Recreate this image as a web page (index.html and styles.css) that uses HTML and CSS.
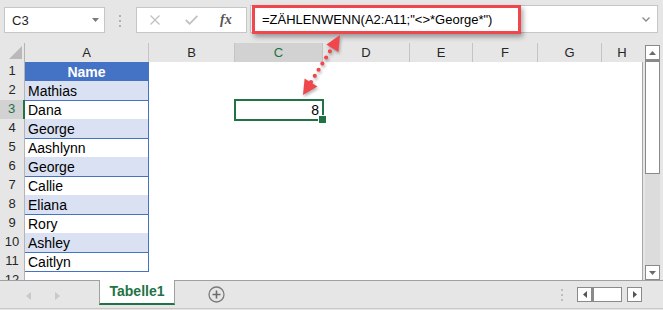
FILE: index.html
```html
<!DOCTYPE html>
<html lang="de">
<head>
    <meta charset="UTF-8">
    <title>Tabelle1 - ZÄHLENWENN</title>
    <link rel="stylesheet" href="styles.css">
</head>
<body>
    <div class="toolbar">
        <div class="namebox">
            <span>C3</span>
            <svg width="7" height="4" viewBox="0 0 7 4"><polygon points="0,0 7,0 3.5,4" fill="#7a7a7a"/></svg>
        </div>
        <div class="grip"><span></span><span></span><span></span></div>
        <div class="fx-box">
            <svg class="ico-x" width="10" height="10" viewBox="0 0 10 10"><path d="M0.5 0.5 L9.5 9.5 M9.5 0.5 L0.5 9.5" stroke="#c2c2c2" stroke-width="1.4" fill="none"/></svg>
            <svg class="ico-ok" width="13" height="10" viewBox="0 0 13 10"><path d="M0.8 5 L4.6 8.8 L12.4 0.8" stroke="#c2c2c2" stroke-width="1.8" fill="none"/></svg>
            <span class="fx">fx</span>
        </div>
        <div class="formula">
            <span>=ZÄHLENWENN(A2:A11;"&lt;&gt;*George*")</span>
            <svg class="chev" width="8" height="5" viewBox="0 0 8 5"><path d="M0.5 0.5 L4 4 L7.5 0.5" stroke="#8a8a8a" stroke-width="1.3" fill="none"/></svg>
            <div class="mark"></div>
        </div>
    </div>

    <div class="sheet">
        <div class="grid">
            <div class="head-row">
                <div class="corner">
                    <svg width="24" height="18" viewBox="0 0 24 18"><polygon points="22,3 22,16 9,16" fill="#b9b9b9"/></svg>
                </div>
                <div class="col">A</div>
                <div class="col">B</div>
                <div class="col sel">C</div>
                <div class="col">D</div>
                <div class="col">E</div>
                <div class="col">F</div>
                <div class="col">G</div>
                <div class="col last">H</div>
            </div>
            <div class="body">
                <div class="row"><div class="rh">1</div><div class="cell head">Name</div></div>
                <div class="row"><div class="rh">2</div><div class="cell band">Mathias</div></div>
                <div class="row">
                    <div class="rh sel">3</div><div class="cell">Dana</div>
                    <div class="active">8</div>
                </div>
                <div class="row"><div class="rh">4</div><div class="cell band">George</div></div>
                <div class="row"><div class="rh">5</div><div class="cell">Aashlynn</div></div>
                <div class="row"><div class="rh">6</div><div class="cell band">George</div></div>
                <div class="row"><div class="rh">7</div><div class="cell">Callie</div></div>
                <div class="row"><div class="rh">8</div><div class="cell band">Eliana</div></div>
                <div class="row"><div class="rh">9</div><div class="cell">Rory</div></div>
                <div class="row"><div class="rh">10</div><div class="cell band">Ashley</div></div>
                <div class="row"><div class="rh">11</div><div class="cell">Caitlyn</div></div>
                <div class="row"><div class="rh">12</div></div>
            </div>
        </div>
        <div class="vscroll">
            <div class="vbtn"><svg width="7" height="4" viewBox="0 0 7 4"><polygon points="0,4 7,4 3.5,0" fill="#6a6a6a"/></svg></div>
            <div class="vthumb"></div>
            <div class="vtrack"></div>
            <div class="vbtn"><svg width="7" height="4" viewBox="0 0 7 4"><polygon points="0,0 7,0 3.5,4" fill="#6a6a6a"/></svg></div>
        </div>
    </div>

    <div class="tabbar">
        <div class="nav">
            <svg width="5" height="8" viewBox="0 0 5 8"><polygon points="5,0 5,8 0,4" fill="#c9c9c9"/></svg>
            <svg width="5" height="8" viewBox="0 0 5 8"><polygon points="0,0 0,8 5,4" fill="#c9c9c9"/></svg>
        </div>
        <div class="tab">Tabelle1</div>
        <svg class="add" width="17" height="17" viewBox="0 0 17 17">
            <circle cx="8.5" cy="8.5" r="7.5" fill="none" stroke="#7b7b7b" stroke-width="1.3"/>
            <path d="M8.5 4.5 V12.5 M4.5 8.5 H12.5" stroke="#6b6b6b" stroke-width="1.6"/>
        </svg>
        <div class="grip small"><span></span><span></span><span></span></div>
        <div class="hscroll">
            <div class="hbtn"><svg width="4" height="7" viewBox="0 0 4 7"><polygon points="4,0 4,7 0,3.5" fill="#555"/></svg></div>
            <div class="hthumb"></div>
            <div class="htrack"></div>
            <div class="hbtn"><svg width="4" height="7" viewBox="0 0 4 7"><polygon points="0,0 0,7 4,3.5" fill="#555"/></svg></div>
        </div>
    </div>

    <!-- callout arrow between formula and result -->
    <svg class="callout" width="663" height="310" viewBox="0 0 663 310">
        <line x1="311" y1="82" x2="332" y2="48" stroke="#f0474c" stroke-width="4.2" stroke-linecap="round" stroke-dasharray="0 7.2"/>
        <polygon points="340,35 338.4,52 326.4,44.6" fill="#f0474c"/>
        <polygon points="303,95 317.4,86.5 304.6,78.5" fill="#f0474c"/>
    </svg>
</body>
</html>
```

FILE: styles.css
```css
* {
    margin: 0;
    padding: 0;
    box-sizing: border-box;
}

body {
    width: 663px;
    height: 310px;
    overflow: hidden;
    position: relative;
    background: #e6e6e6;
    font-family: "Liberation Sans", Arial, sans-serif;
    color: #000;
}

/* formula bar */

.toolbar {
    display: flex;
    align-items: flex-start;
    height: 43px;
}

.namebox {
    margin: 7px 0 0 4px;
    width: 101px;
    height: 26px;
    background: #fff;
    border: 1px solid #c6c6c6;
    display: flex;
    align-items: center;
    justify-content: space-between;
    padding: 0 5px 0 7px;
    font-size: 13px;
    color: #222;
}

.grip {
    display: flex;
    flex-direction: column;
    gap: 3px;
    margin: 15px 0 0 14px;
}

.grip span {
    width: 2px;
    height: 2px;
    background: #b2b2b2;
}

.fx-box {
    margin: 7px 0 0 15px;
    width: 111px;
    height: 26px;
    background: #fff;
    border: 1px solid #c6c6c6;
    display: flex;
    align-items: center;
}

.ico-x {
    margin-left: 13px;
}

.ico-ok {
    margin-left: 25px;
}

.fx {
    margin-left: 22px;
    font-family: "Liberation Serif", serif;
    font-style: italic;
    font-weight: bold;
    font-size: 14px;
    color: #555;
    line-height: 1;
}

.formula {
    position: relative;
    margin: 5px 0 0 3px;
    width: 408px;
    height: 28px;
    background: #fff;
    border: 1px solid #c6c6c6;
    display: flex;
    align-items: center;
    padding: 1px 7px 0 11px;
    font-size: 13px;
}

.chev {
    margin-left: auto;
}

.formula .mark {
    position: absolute;
    left: 1px;
    top: -1px;
    width: 269px;
    height: 29px;
    border: 3px solid #f0474c;
    box-shadow: 2px 3px 5px rgba(0,0,0,0.35);
}

/* grid */

.sheet {
    display: flex;
    height: 237px;
}

.grid {
    width: 643px;
    display: flex;
    flex-direction: column;
}

.head-row,
.row {
    display: grid;
    grid-template-columns: 25px 124px 86px 88px 87px 63px 65px 64px 40px;
    height: 19px;
}

.corner {
    border-bottom: 1px solid #ababab;
    border-right: 1px solid #b4b4b4;
}

.corner svg {
    display: block;
}

.col {
    text-align: center;
    font-size: 13px;
    line-height: 19px;
    color: #262626;
    border-right: 1px solid #c4c4c4;
    border-bottom: 1px solid #ababab;
}

.col.last {
    border-right: none;
}

.col.sel {
    background: #d2d2d2;
    color: #217346;
    border-bottom: 2px solid #217346;
}

.body {
    flex: 1;
    background: #fff;
    border-right: 1px solid #a6a6a6;
    overflow: hidden;
}

.rh {
    background: #e6e6e6;
    text-align: center;
    font-size: 13px;
    line-height: 18px;
    color: #262626;
    border-right: 1px solid #b4b4b4;
    border-bottom: 1px solid #d4d4d4;
}

.rh.sel {
    background: #d2d2d2;
    color: #217346;
    border-right: 2px solid #217346;
}

.cell {
    padding: 1px 0 0 3px;
    font-size: 14px;
    line-height: 18px;
    border-right: 1px solid #4472c4;
    border-bottom: 1px solid #4472c4;
    white-space: nowrap;
}

.cell.band {
    background: #d9e1f2;
}

.cell.head {
    background: #4472c4;
    color: #fff;
    font-weight: bold;
    text-align: center;
    padding-left: 0;
}

.active {
    grid-column: 4;
    position: relative;
    text-align: right;
    padding: 1px 4px 0 0;
    font-size: 14px;
    line-height: 18px;
}

.active::before {
    content: "";
    position: absolute;
    left: -1px;
    top: -1px;
    right: -1px;
    bottom: -1px;
    border: 2px solid #217346;
}

.active::after {
    content: "";
    position: absolute;
    right: -4px;
    bottom: -4px;
    width: 7px;
    height: 7px;
    background: #217346;
    border: 1px solid #fff;
}

/* scroll bars */

.vscroll {
    margin: 2px 0 0 2px;
    width: 15px;
    height: 235px;
    display: flex;
    flex-direction: column;
}

.vbtn,
.hbtn {
    width: 15px;
    height: 15px;
    background: #fff;
    border: 1px solid #8a8a8a;
    display: flex;
    align-items: center;
    justify-content: center;
}

.vthumb {
    height: 114px;
    background: #fff;
    border: 1px solid #8a8a8a;
    border-top-width: 2px;
}

.vtrack {
    flex: 1;
    background: #dcdcdc;
}

/* sheet tabs */

.tabbar {
    display: flex;
    align-items: center;
    height: 29px;
    border-top: 1px solid #a0a0a0;
    border-bottom: 1px solid #c8c8c8;
}

.nav {
    width: 99px;
    display: flex;
    align-items: center;
    gap: 24px;
    padding: 2px 0 0 26px;
}

.tab {
    align-self: flex-start;
    margin-top: -1px;
    width: 76px;
    height: 25px;
    background: #fff;
    border-left: 1px solid #a0a0a0;
    border-right: 1px solid #a0a0a0;
    border-bottom: 2px solid #217346;
    text-align: center;
    font-size: 14px;
    font-weight: bold;
    line-height: 22px;
    color: #217346;
}

.add {
    margin: 0 0 0 33px;
}

.grip.small {
    margin: 0 0 0 336px;
    gap: 3px;
}

.grip.small span {
    background: #bdbdbd;
}

.hscroll {
    display: flex;
    margin-left: 14px;
}

.hthumb {
    width: 30px;
    height: 15px;
    background: #fff;
    border: 1px solid #8a8a8a;
    border-left-width: 2px;
}

.htrack {
    width: 5px;
}

.callout {
    position: absolute;
    left: 0;
    top: 0;
    pointer-events: none;
    filter: drop-shadow(1px 2px 1.5px rgba(0,0,0,0.3));
}
```
